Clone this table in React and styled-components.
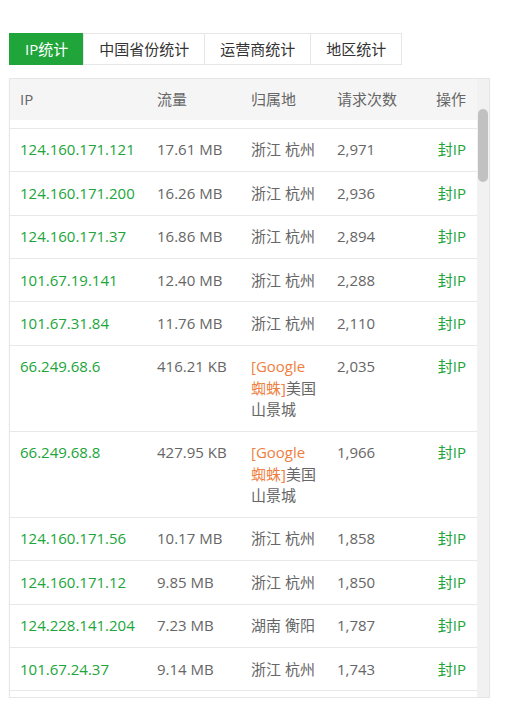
import React, { useLayoutEffect, useRef, useState } from 'react';
import styled, { createGlobalStyle } from 'styled-components';

const GlobalStyle = createGlobalStyle`
  html, body { margin: 0; padding: 0; background: #fff; }
  body {
    font-family: "Open Sans", "Noto Sans CJK SC", sans-serif;
    font-size: 15px;
    color: #666;
  }
`;

const Page = styled.div`
  padding: 33px 0 0 9px;
`;

const Tabs = styled.div`
  display: flex;
`;

const Tab = styled.div`
  height: 32px;
  box-sizing: border-box;
  padding: 0 15px;
  line-height: 30px;
  border: 1px solid ${(p) => (p.$active ? '#20a53a' : '#e6e6e6')};
  background: ${(p) => (p.$active ? '#20a53a' : '#fff')};
  color: ${(p) => (p.$active ? '#fff' : '#333')};
  cursor: pointer;
  white-space: nowrap;
  & + & { margin-left: -1px; }
`;

const Frame = styled.div`
  margin-top: 13px;
  width: 481px;
  height: 620px;
  box-sizing: border-box;
  border: 1px solid #e6e6e6;
  display: flex;
  box-shadow: 0 1px 2px rgba(0, 0, 0, 0.04);
`;

const ScrollArea = styled.div`
  flex: 1;
  min-width: 0;
  overflow-y: scroll;
  overflow-x: hidden;
  scrollbar-width: none;
  &::-webkit-scrollbar { display: none; }
`;

const Track = styled.div`
  width: 12px;
  flex: none;
  background: #f1f1f1;
  display: flex;
  flex-direction: column;
  align-items: center;
`;

const Thumb = styled.div`
  width: 10px;
  border-radius: 5px;
  background: #c1c1c1;
`;

const Table = styled.table`
  width: 100%;
  border-collapse: collapse;
  table-layout: fixed;
`;

const Th = styled.th`
  position: sticky;
  top: 0;
  z-index: 1;
  background: #f5f5f5;
  color: #666;
  font-weight: normal;
  text-align: ${(p) => (p.$right ? 'right' : 'left')};
  padding: 10px ${(p) => (p.$right ? '11px' : '10px')} 10px 10px;
  line-height: 21px;
`;

const Td = styled.td`
  padding: 10.6px ${(p) => (p.$right ? '11px' : '10px')} 10.6px 10px;
  line-height: 21.25px;
  border-bottom: 1px solid #e8e8e8;
  vertical-align: top;
  text-align: ${(p) => (p.$right ? 'right' : 'left')};
  color: ${(p) => (p.$green ? '#20a53a' : '#666')};
`;

const Spider = styled.span`
  color: #ee7f3f;
`;

const Action = styled.a`
  color: #20a53a;
  text-decoration: none;
  cursor: pointer;
`;

const above = [
  ['124.160.171.88', '21.34 MB', '浙江 杭州', '3,642'],
  ['124.160.171.45', '19.87 MB', '浙江 杭州', '3,510'],
  ['101.67.19.22', '18.05 MB', '浙江 杭州', '3,377'],
  ['124.160.171.140', '18.72 MB', '浙江 杭州', '3,254'],
  ['101.67.31.16', '17.93 MB', '浙江 杭州', '3,108'],
  ['124.160.171.93', '17.20 MB', '浙江 杭州', '3,019'],
];

const SPIDER = 'spider';

const visible = [
  ['124.160.171.121', '17.61 MB', '浙江 杭州', '2,971'],
  ['124.160.171.200', '16.26 MB', '浙江 杭州', '2,936'],
  ['124.160.171.37', '16.86 MB', '浙江 杭州', '2,894'],
  ['101.67.19.141', '12.40 MB', '浙江 杭州', '2,288'],
  ['101.67.31.84', '11.76 MB', '浙江 杭州', '2,110'],
  ['66.249.68.6', '416.21 KB', SPIDER, '2,035'],
  ['66.249.68.8', '427.95 KB', SPIDER, '1,966'],
  ['124.160.171.56', '10.17 MB', '浙江 杭州', '1,858'],
  ['124.160.171.12', '9.85 MB', '浙江 杭州', '1,850'],
  ['124.228.141.204', '7.23 MB', '湖南 衡阳', '1,787'],
  ['101.67.24.37', '9.14 MB', '浙江 杭州', '1,743'],
];

const fmt = (n) => n.toLocaleString('en-US');

const below = Array.from({ length: 100 }, (_, i) => {
  const a = (i * 37 + 11) % 250;
  const b = (i * 53 + 7) % 250;
  const ip = i % 3 === 0 ? `101.67.${a}.${b}` : `124.160.${a}.${b}`;
  const mb = (8.9 - i * 0.07).toFixed(2) + ' MB';
  return [ip, mb, i % 7 === 3 ? '湖南 衡阳' : '浙江 杭州', fmt(1720 - i * 13)];
});

const rows = [...above, ...visible, ...below];

function Location({ value }) {
  if (value === SPIDER) {
    return (
      <>
        <Spider>[Google蜘蛛]</Spider>美国 山景城
      </>
    );
  }
  return value;
}

export default function App() {
  const boxRef = useRef(null);
  const anchorRef = useRef(null);
  const [thumb, setThumb] = useState({ top: 0, height: 0 });

  useLayoutEffect(() => {
    const box = boxRef.current;
    const row = anchorRef.current;
    if (!box || !row) return;
    const b = box.getBoundingClientRect();
    const r = row.getBoundingClientRect();
    box.scrollTop = box.scrollTop + (r.top - b.top) - 49;
    const update = () => {
      const track = box.clientHeight;
      setThumb({
        top: (box.scrollTop / box.scrollHeight) * track,
        height: (box.clientHeight / box.scrollHeight) * track,
      });
    };
    update();
    box.addEventListener('scroll', update);
    return () => box.removeEventListener('scroll', update);
  }, []);

  return (
    <>
      <GlobalStyle />
      <Page>
        <Tabs>
          <Tab $active>IP统计</Tab>
          <Tab>中国省份统计</Tab>
          <Tab>运营商统计</Tab>
          <Tab>地区统计</Tab>
        </Tabs>
        <Frame>
          <ScrollArea ref={boxRef}>
            <Table>
              <colgroup>
                <col style={{ width: 137 }} />
                <col style={{ width: 94 }} />
                <col style={{ width: 86 }} />
                <col style={{ width: 80 }} />
                <col />
              </colgroup>
              <thead>
                <tr>
                  <Th>IP</Th>
                  <Th>流量</Th>
                  <Th>归属地</Th>
                  <Th>请求次数</Th>
                  <Th $right>操作</Th>
                </tr>
              </thead>
              <tbody>
                {rows.map((r, i) => (
                  <tr key={i} ref={i === above.length ? anchorRef : undefined}>
                    <Td $green>{r[0]}</Td>
                    <Td>{r[1]}</Td>
                    <Td>
                      <Location value={r[2]} />
                    </Td>
                    <Td>{r[3]}</Td>
                    <Td $right>
                      <Action>封IP</Action>
                    </Td>
                  </tr>
                ))}
              </tbody>
            </Table>
          </ScrollArea>
          <Track>
            <Thumb style={{ marginTop: thumb.top, height: thumb.height }} />
          </Track>
        </Frame>
      </Page>
    </>
  );
}
